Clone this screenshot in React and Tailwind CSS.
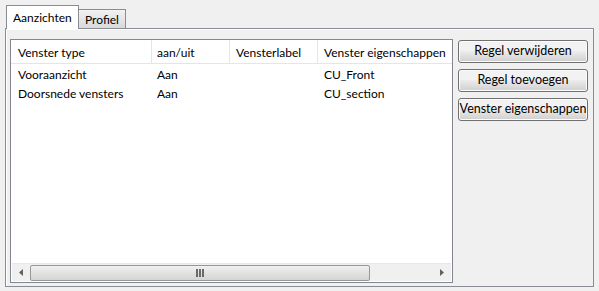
import React from 'react';

const font = { fontFamily: 'Lato, "Noto Sans", "Liberation Sans", sans-serif' };

function WinButton({ children }) {
  return (
    <button className="w-[130px] h-[23px] rounded-[3px] border border-[#707070] bg-gradient-to-b from-[#f2f2f2] from-45% via-[#ebebeb] via-50% to-[#cfcfcf] text-[12.5px] text-black leading-none whitespace-nowrap shadow-[inset_0_0_0_1px_#fcfcfc]">
      {children}
    </button>
  );
}

export default function App() {
  const rows = [
    ['Vooraanzicht', 'Aan', '', 'CU_Front'],
    ['Doorsnede vensters', 'Aan', '', 'CU_section'],
  ];

  return (
    <div className="w-[599px] h-[291px] bg-[#f0f0f0] overflow-hidden text-black" style={font}>
      <div className="pt-[5px] pl-[5px]">
        {/* Tabs */}
        <div className="flex items-end h-[23px] pl-px">
          <div className="relative z-10 h-[24px] -mb-px w-[73px] border border-b-0 border-[#898c95] bg-white flex items-start pl-[6px] pt-[3px] text-[12px]">
            Aanzichten
          </div>
          <div className="h-[19px] w-[48px] -ml-px border border-b-0 border-[#898c95] bg-gradient-to-b from-[#f2f2f2] to-[#d9d9d9] flex items-start pl-[6px] pt-[1px] text-[12px]">
            Profiel
          </div>
        </div>

        {/* Panel */}
        <div className="w-[589px] h-[259px] border border-[#898c95] bg-[#f0f0f0] shadow-[inset_1px_1px_0_#ffffff] flex gap-[5px] pl-[4px] pt-[10px]">
          {/* List */}
          <div className="w-[443px] h-[244px] border border-[#828790] bg-white flex flex-col">
            <div className="flex h-[24px] border-b border-[#e5e5e5] text-[12px]">
              <div className="w-[141px] pl-[7px] pt-[4px] border-r border-[#e5e5e5]">Venster type</div>
              <div className="w-[78px] pl-[5px] pt-[4px] border-r border-[#e5e5e5]">aan/uit</div>
              <div className="w-[88px] pl-[6px] pt-[4px] border-r border-[#e5e5e5]">Vensterlabel</div>
              <div className="flex-1 pl-[6px] pt-[4px] whitespace-nowrap">Venster eigenschappen</div>
            </div>
            <div className="flex-1 pt-[1px] text-[12px] leading-[19px]">
              {rows.map((r) => (
                <div key={r[0]} className="flex h-[19px] items-center">
                  <div className="w-[141px] pl-[7px]">{r[0]}</div>
                  <div className="w-[78px] pl-[5px]">{r[1]}</div>
                  <div className="w-[88px] pl-[6px]">{r[2]}</div>
                  <div className="flex-1 pl-[6px]">{r[3]}</div>
                </div>
              ))}
            </div>
            {/* Horizontal scrollbar */}
            <div className="h-[18px] mx-px mb-px bg-[#f0f0f0] border-t border-[#e8e8e8] flex items-center">
              <div className="w-[18px] h-full flex items-center justify-center">
                <svg width="4" height="7" viewBox="0 0 4 7"><path d="M4 0 L0 3.5 L4 7 Z" fill="#606060" /></svg>
              </div>
              <div className="w-[340px] h-[16px] rounded-[2px] border border-[#979797] bg-gradient-to-b from-[#f1f1f1] to-[#d4d4d4] flex items-center justify-center gap-px">
                <span className="w-[2px] h-[8px] bg-[#6a6a6a]" />
                <span className="w-[2px] h-[8px] bg-[#6a6a6a]" />
                <span className="w-[2px] h-[8px] bg-[#6a6a6a]" />
              </div>
              <div className="flex-1" />
              <div className="w-[18px] h-full flex items-center justify-center">
                <svg width="4" height="7" viewBox="0 0 4 7"><path d="M0 0 L4 3.5 L0 7 Z" fill="#606060" /></svg>
              </div>
            </div>
          </div>

          {/* Buttons */}
          <div className="flex flex-col gap-[6px] pt-px">
            <WinButton>Regel verwijderen</WinButton>
            <WinButton>Regel toevoegen</WinButton>
            <WinButton>Venster eigenschappen</WinButton>
          </div>
        </div>
      </div>
    </div>
  );
}
